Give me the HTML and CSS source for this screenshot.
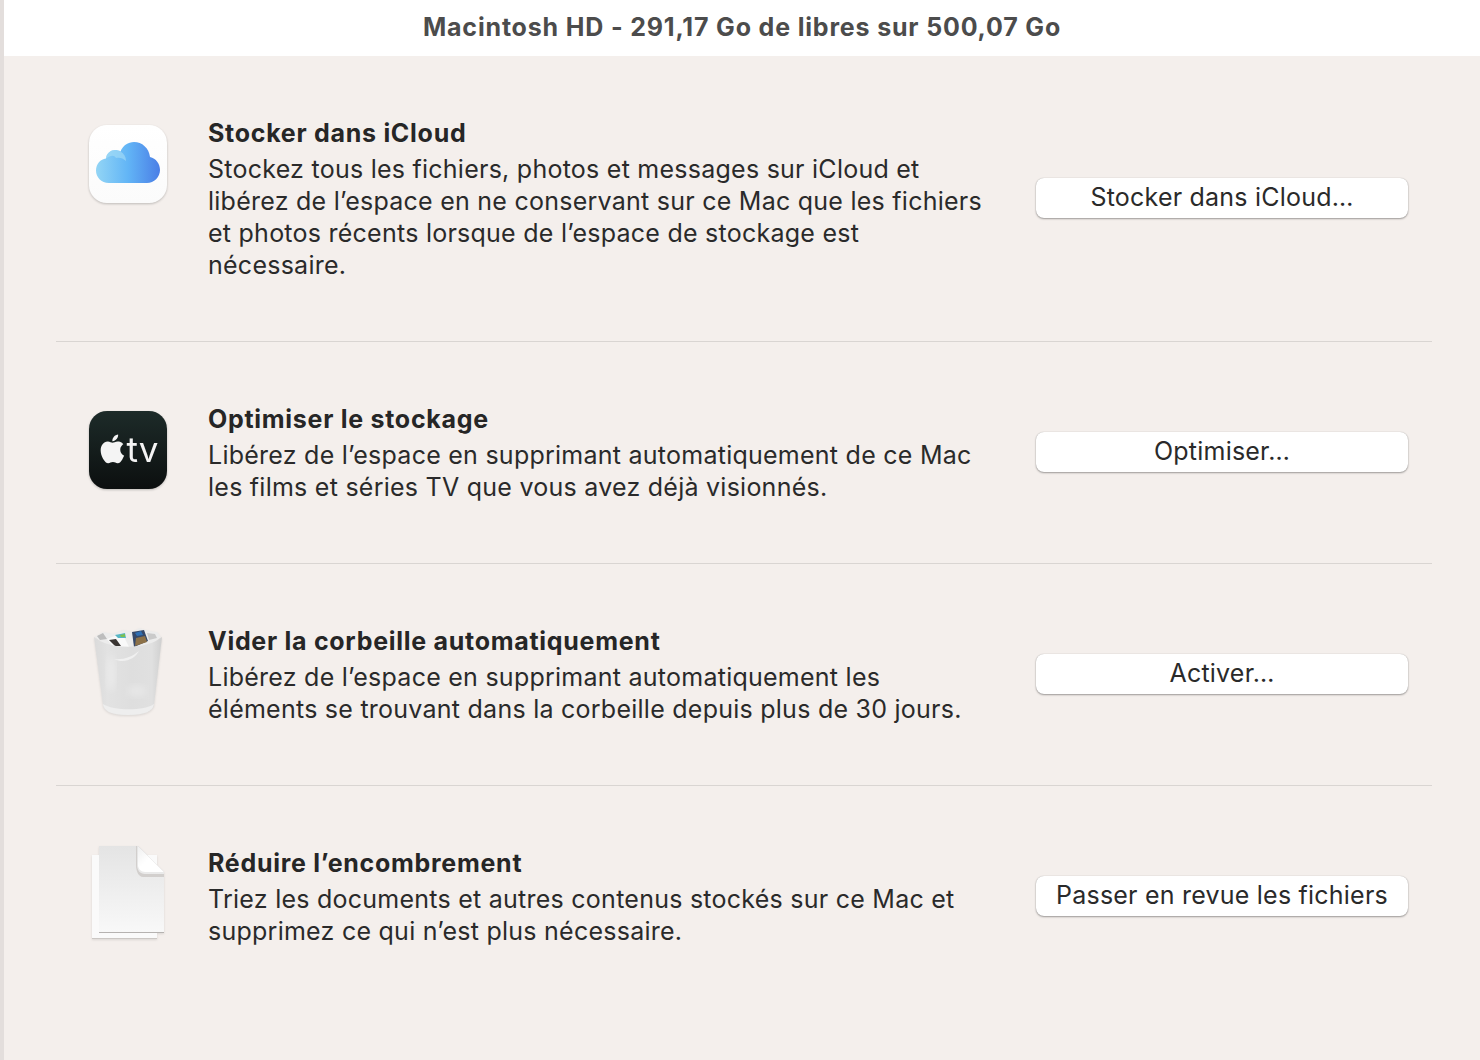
FILE: index.html
```html
<!DOCTYPE html>
<html lang="fr">
<head>
<meta charset="UTF-8" />
<meta name="viewport" content="width=device-width, initial-scale=1.0" />
<title>Macintosh HD</title>
<link rel="stylesheet" href="styles.css">
</head>
<body>
    <div class="window">
        <header class="titlebar">Macintosh HD - 291,17 Go de libres sur 500,07 Go</header>

        <section class="row">
            <svg class="icon" viewBox="0 0 78 78">
                <defs>
                    <linearGradient id="cloudFill" x1="0" y1="0" x2="1" y2="0">
                        <stop offset="0" stop-color="#93d5f5" />
                        <stop offset="0.5" stop-color="#62b5f6" />
                        <stop offset="1" stop-color="#4a7ee6" />
                    </linearGradient>
                    <linearGradient id="tileFill" x1="0" y1="0" x2="0" y2="1">
                        <stop offset="0" stop-color="#ffffff" />
                        <stop offset="1" stop-color="#fbfbfb" />
                    </linearGradient>
                </defs>
                <rect width="78" height="78" rx="18" fill="url(#tileFill)" />
                <path d="M20 58C12 58 7 52 7 45.5C7 39 11.5 34 17 33.5C17.5 28 22 25 26 25C28 25 30 25.5 31.5 26.5C34 20.5 39 17 45 17C53 17 60 23 61 32C67 33.5 71 38.5 71 45C71 52 65 58 58 58Z" fill="url(#cloudFill)" />
                <path d="M31.5 26.5C35 28.5 37 32 37 36C34 33 30 32 27 33C25 30 22 30 17 33.5C17.5 28 22 25 26 25C28 25 30 25.5 31.5 26.5Z" fill="#a6ddf6" opacity="0.6" />
            </svg>
            <div class="text">
                <h2>Stocker dans iCloud</h2>
                <p>Stockez tous les fichiers, photos et messages sur iCloud et libérez de l’espace en ne conservant sur ce Mac que les fichiers et photos récents lorsque de l’espace de stockage est nécessaire.</p>
            </div>
            <button>Stocker dans iCloud…</button>
        </section>

        <section class="row">
            <svg class="icon" viewBox="0 0 78 78">
                <defs>
                    <linearGradient id="tvFill" x1="0" y1="0" x2="0" y2="1">
                        <stop offset="0" stop-color="#1d2b29" />
                        <stop offset="1" stop-color="#0c0f0f" />
                    </linearGradient>
                </defs>
                <rect width="78" height="78" rx="18" fill="url(#tvFill)" />
                <path transform="translate(9 23.5) scale(1.2)" fill="#f4f4f4" d="M12.152 6.896c-.948 0-2.415-1.078-3.96-1.04-2.04.027-3.91 1.183-4.961 3.014-2.117 3.675-.546 9.103 1.519 12.09 1.013 1.454 2.208 3.09 3.792 3.039 1.52-.065 2.09-.987 3.935-.987 1.831 0 2.35.987 3.96.948 1.637-.026 2.676-1.48 3.676-2.948 1.156-1.688 1.636-3.325 1.662-3.415-.039-.013-3.182-1.221-3.22-4.857-.026-3.04 2.48-4.494 2.597-4.559-1.429-2.09-3.623-2.324-4.39-2.376-2-.156-3.675 1.09-4.61 1.09zM15.53 3.83c.843-1.012 1.4-2.427 1.245-3.83-1.207.052-2.662.805-3.532 1.818-.78.896-1.454 2.338-1.273 3.714 1.338.104 2.715-.688 3.559-1.701" />
                <text class="tv-label" x="37.5" y="51">tv</text>
            </svg>
            <div class="text">
                <h2>Optimiser le stockage</h2>
                <p>Libérez de l’espace en supprimant automatiquement de ce Mac les films et séries TV que vous avez déjà visionnés.</p>
            </div>
            <button>Optimiser…</button>
        </section>

        <section class="row">
            <svg class="icon icon-flat" viewBox="0 0 78 78">
                <defs>
                    <linearGradient id="binFill" x1="0" y1="0" x2="1" y2="0">
                        <stop offset="0" stop-color="#dadada" />
                        <stop offset="0.2" stop-color="#e2e2e2" />
                        <stop offset="0.55" stop-color="#dedede" />
                        <stop offset="0.85" stop-color="#e0e0e0" />
                        <stop offset="1" stop-color="#cfcfcf" />
                    </linearGradient>
                    <filter id="soft"><feGaussianBlur stdDeviation="3" /></filter>
                </defs>
                <!-- crumpled papers -->
                <path d="M6 4L14 -1L24 1L34 -3L44 -1L50 -5L60 -2L68 -1L72 4L60 14H18Z" fill="#ececec" />
                <path d="M8 3L14 0L18 6L11 7Z" fill="#bdbdbd" />
                <path d="M58 0L66 1L68 5L60 7Z" fill="#cacaca" />
                <path d="M18 6L33 0L40 14H24Z" fill="#f9f9f9" />
                <path d="M20 7L26 13H32L27 6Z" fill="#3a3532" />
                <path d="M26 2L36 0L37 5L29 5Z" fill="#58b6c4" />
                <path d="M31 2L36 1L36 4L32 4Z" fill="#7cc04f" />
                <path d="M43 -1L55 -3L59 8L45 14Z" fill="#36496a" />
                <path d="M47 5L56 3L58 9L46 13Z" fill="#8c7148" />
                <path d="M46 0L52 -2L54 2L48 3Z" fill="#2f6fb3" />
                <!-- bin -->
                <path d="M5 4C20 17 58 17 73 4L65 72C64 78 56 82 39 82C22 82 15 78 14 72Z" fill="url(#binFill)" />
                <ellipse cx="22" cy="40" rx="5" ry="18" fill="#e9e9e9" filter="url(#soft)" />
                <ellipse cx="48" cy="58" rx="10" ry="6" fill="#e6e6e6" filter="url(#soft)" />
                <path d="M25 26C34 27 43 24 50 18C46 26 35 31 25 26Z" fill="#f0f0f0" />
                <path d="M14 71C15 78 22 82 39 82C56 82 64 78 65 71C56 78 24 78 14 71Z" fill="#eeeeee" />
            </svg>
            <div class="text">
                <h2>Vider la corbeille automatiquement</h2>
                <p>Libérez de l’espace en supprimant automatiquement les éléments se trouvant dans la corbeille depuis plus de 30 jours.</p>
            </div>
            <button>Activer…</button>
        </section>

        <section class="row">
            <svg class="icon icon-flat" viewBox="0 0 78 78">
                <defs>
                    <linearGradient id="sheetFill" x1="0" y1="0" x2="0" y2="1">
                        <stop offset="0" stop-color="#e4e4e4" />
                        <stop offset="1" stop-color="#f8f8f8" />
                    </linearGradient>
                    <linearGradient id="foldFill" x1="0" y1="0" x2="1" y2="1">
                        <stop offset="0" stop-color="#efefef" />
                        <stop offset="0.45" stop-color="#ffffff" />
                    </linearGradient>
                </defs>
                <path d="M3 0H68V84H3Z" fill="#cbc7c4" />
                <path d="M3 0H68V83H3Z" fill="#fafafa" />
                <path d="M10 -9H49L75 17V78H10Z" fill="#b5b2b0" />
                <path d="M10 -9H49L75 17V77H10Z" fill="url(#sheetFill)" />
                <path d="M48 -9V10C48 15 51 19 56 19H75V22H54C50 22 47 17 47 10V-9Z" fill="#d2cfcd" />
                <path d="M49 -9L75 17H56C52 17 49 14 49 10Z" fill="url(#foldFill)" />
            </svg>
            <div class="text">
                <h2>Réduire l’encombrement</h2>
                <p>Triez les documents et autres contenus stockés sur ce Mac et supprimez ce qui n’est plus nécessaire.</p>
            </div>
            <button>Passer en revue les fichiers</button>
        </section>
    </div>
</body>
</html>
```

FILE: styles.css
```css
html, body {
    margin: 0;
    height: 100%;
}
body {
    background: #e3dedc;
    font-family: Inter, "Noto Sans", sans-serif;
    color: #2a2a2a;
    overflow: hidden;
}
.window {
    margin-left: 4px;
    height: 100%;
    background: #f4efec;
}
.titlebar {
    height: 56px;
    line-height: 55px;
    background: #fff;
    text-align: center;
    font-size: 25px;
    font-weight: 700;
    letter-spacing: 0.83px;
    color: #4c4c4c;
}
.row {
    display: flex;
    align-items: flex-start;
    margin: 0 48px 0 52px;
    padding: 61px 24px 60px 33px;
    border-bottom: 1px solid #d9d5d2;
}
.row:last-child {
    border-bottom: none;
}
.icon {
    flex: none;
    width: 78px;
    height: 78px;
    margin-top: 8px;
    overflow: visible;
    filter: drop-shadow(0 1px 1px rgba(0,0,0,0.22));
}
.icon-flat {
    filter: drop-shadow(0 1px 1px rgba(0,0,0,0.1));
}
.tv-label {
    font-family: Inter, sans-serif;
    font-size: 35px;
    font-weight: 400;
    fill: #f4f4f4;
}
.text {
    flex: none;
    width: 780px;
    margin-left: 41px;
    font-size: 25px;
    line-height: 32px;
    letter-spacing: 0.25px;
}
.text h2 {
    margin: 0 0 4px;
    font-size: 25px;
    line-height: 32px;
    font-weight: 700;
    letter-spacing: 0.72px;
    color: #262626;
}
.text p {
    margin: 0;
}
button {
    flex: none;
    align-self: center;
    width: 372px;
    height: 40px;
    margin: -2px 0 0 48px;
    padding: 0 0 2px;
    border: none;
    border-radius: 8px;
    background: #fff;
    box-shadow: 0 1px 2px rgba(0,0,0,0.35), 0 0 1px rgba(0,0,0,0.25);
    font-family: inherit;
    font-size: 25px;
    letter-spacing: 0.22px;
    color: #2a2a2a;
}
```
